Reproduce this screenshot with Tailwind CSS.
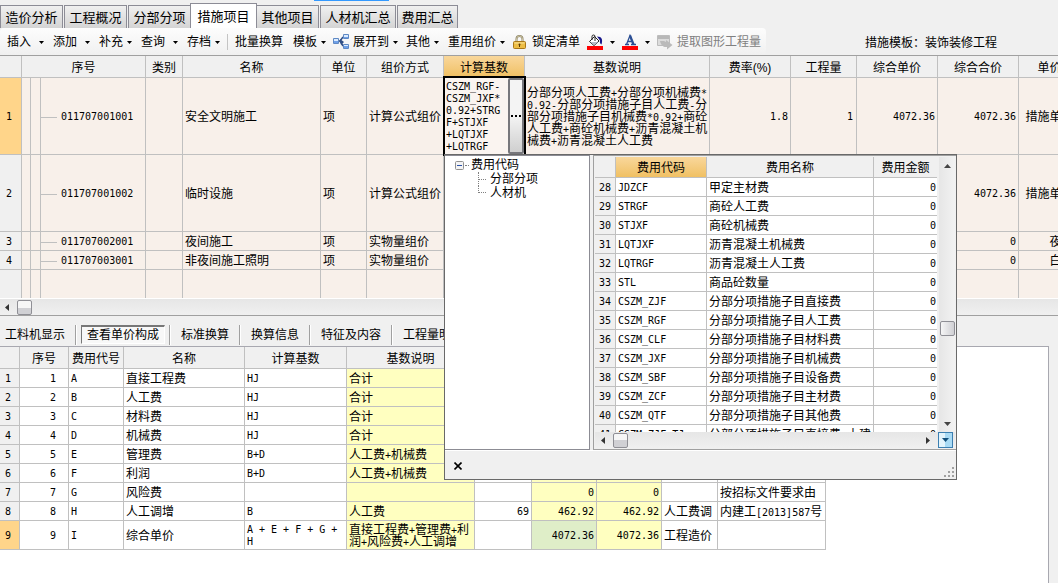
<!DOCTYPE html>
<html lang="zh-CN">
<head>
<meta charset="utf-8">
<title>措施项目</title>
<script src="https://cdn.jsdelivr.net/npm/@tailwindcss/browser@4"></script>
</head>
<body class="relative flex h-screen flex-col overflow-hidden bg-[#f0f0f0] font-['Liberation_Sans','Noto_Sans_CJK_SC',sans-serif] text-[12px] leading-none text-black">

<!-- page tabs -->
<nav class="relative flex h-7 shrink-0 items-end text-[13px]">
  <div class="absolute top-0 left-[314px] h-px w-[75px] bg-[#3399ff]"></div>
  <button class="h-[23px] w-[63px] border border-b-0 border-[#8c8c96] bg-linear-to-b from-[#f0f0f0] to-[#d4d4d4]">造价分析</button>
  <button class="ml-px h-[23px] w-[63px] border border-b-0 border-[#8c8c96] bg-linear-to-b from-[#f0f0f0] to-[#d4d4d4]">工程概况</button>
  <button class="ml-px h-[23px] w-[62px] border border-r-0 border-b-0 border-[#8c8c96] bg-linear-to-b from-[#f0f0f0] to-[#d4d4d4]">分部分项</button>
  <button class="h-[25px] w-[67px] border border-b-0 border-[#8c8c96] bg-white">措施项目</button>
  <button class="h-[23px] w-[62px] border border-l-0 border-b-0 border-[#8c8c96] bg-linear-to-b from-[#f0f0f0] to-[#d4d4d4]">其他项目</button>
  <button class="ml-px h-[23px] w-[76px] border border-b-0 border-[#8c8c96] bg-linear-to-b from-[#f0f0f0] to-[#d4d4d4]">人材机汇总</button>
  <button class="ml-px h-[23px] w-[61px] border border-b-0 border-[#8c8c96] bg-linear-to-b from-[#f0f0f0] to-[#d4d4d4]">费用汇总</button>
</nav>

<!-- toolbar -->
<div class="flex h-7 shrink-0 items-stretch border-b border-[#a0a0a0]">
  <div class="flex w-[766px] items-center rounded-sm bg-linear-to-b from-[#fdfdfd] to-[#f0f0f0] pt-px pl-[7px]">
    <button class="flex w-[46px] items-center gap-2">插入<svg class="h-[3px] w-[5px]" viewBox="0 0 5 3"><path d="M0 0h5L2.500 3z"/></svg></button>
    <button class="flex w-[46px] items-center gap-2">添加<svg class="h-[3px] w-[5px]" viewBox="0 0 5 3"><path d="M0 0h5L2.500 3z"/></svg></button>
    <button class="flex w-[42px] items-center gap-1">补充<svg class="h-[3px] w-[5px]" viewBox="0 0 5 3"><path d="M0 0h5L2.500 3z"/></svg></button>
    <button class="flex w-[46px] items-center gap-2">查询<svg class="h-[3px] w-[5px]" viewBox="0 0 5 3"><path d="M0 0h5L2.500 3z"/></svg></button>
    <button class="flex w-[40px] items-center gap-1">存档<svg class="h-[3px] w-[5px]" viewBox="0 0 5 3"><path d="M0 0h5L2.500 3z"/></svg></button>
    <span class="mr-[7px] h-4 w-px bg-[#c4c4c4]"></span>
    <button class="w-[58px] text-left">批量换算</button>
    <button class="flex w-[40px] items-center gap-1">模板<svg class="h-[3px] w-[5px]" viewBox="0 0 5 3"><path d="M0 0h5L2.500 3z"/></svg></button>
    <button class="flex w-[73px] items-center gap-1">
      <svg class="h-4 w-4" viewBox="0 0 16 16"><path d="M5 7h2l3-4M7 7l3 5" fill="none" stroke="#304f86" stroke-width="1.500"/><g fill="#dcecff" stroke="#5f89c4"><path d="M.5 4.500h5v5h-5zM10.500.5h5v4h-5zM10.500 10.500h5v4h-5z"/></g><path d="M1 7h4v2H1zM11 3h4v1h-4zM11 12h4v2h-4z" fill="#6fa0e8"/><path d="M7 5l4 3-3 3z" fill="#304f86"/></svg>
      <span>展开到</span><svg class="h-[3px] w-[5px]" viewBox="0 0 5 3"><path d="M0 0h5L2.500 3z"/></svg></button>
    <button class="flex w-[42px] items-center gap-1">其他<svg class="h-[3px] w-[5px]" viewBox="0 0 5 3"><path d="M0 0h5L2.500 3z"/></svg></button>
    <button class="flex w-[65px] items-center gap-1">重用组价<svg class="h-[3px] w-[5px]" viewBox="0 0 5 3"><path d="M0 0h5L2.500 3z"/></svg></button>
    <button class="flex w-[74px] items-center gap-[6px]">
      <svg class="h-[14px] w-[13px]" viewBox="0 0 13 14"><path d="M3.500 7V4a3 3 0 0 1 6 0v3" fill="none" stroke="#8a8264" stroke-width="2"/><path d="M3.500 7V4a3 3 0 0 1 6 0v3" fill="none" stroke="#e8e0bc" stroke-width=".7"/><rect x=".5" y="6.500" width="12" height="7" rx="1" fill="#edbd45" stroke="#a97718"/><path d="M1.500 7.500h10v1h-10z" fill="#fbe49c"/><path d="M6 9h1v3H6z" fill="#5c3c05"/><circle cx="6.500" cy="9.500" r="1" fill="#5c3c05"/></svg>锁定清单</button>
    <button class="flex w-[35px] items-center gap-[7px]" aria-label="填充颜色">
      <svg class="h-4 w-4" viewBox="0 0 16 16"><path d="M2.500 7.500l5-5 4.500 4.500-5 4.500z" fill="#fff" stroke="#222"/><path d="M5 6V2.500a1.500 1.500 0 0 1 3 0V7" fill="none" stroke="#222"/><path d="M3.500 8h7.500L7 11z" fill="#b8bcc8"/><path d="M10 2.500c5 0 6 3.500 4.500 8-1-.8-2-1.500-1.500-4z" fill="#16168a"/><path d="M0 12h16v4H0z" fill="#f00"/></svg><svg class="h-[3px] w-[5px]" viewBox="0 0 5 3"><path d="M0 0h5L2.500 3z"/></svg></button>
    <button class="flex w-[35px] items-center gap-[7px]" aria-label="字体颜色">
      <svg class="h-4 w-4" viewBox="0 0 16 16"><path d="M3 10.500h4M9 10.500h5M4.500 10.500L8 1.500l3.500 9M6 7.500h4.500" fill="none" stroke="#2b4f94" stroke-width="1.300"/><path d="M8 1.500l3.500 9" stroke="#2b4f94" stroke-width="2.200"/><path d="M0 12h16v4H0z" fill="#f00"/></svg><svg class="h-[3px] w-[5px]" viewBox="0 0 5 3"><path d="M0 0h5L2.500 3z"/></svg></button>
    <button class="flex items-center gap-1 text-[#808080]" disabled>
      <svg class="h-4 w-4" viewBox="0 0 16 16"><path d="M.5 1.500h12v10H.5z" fill="#dcdcdc" stroke="#bcbcbc"/><path d="M1 2h11v3H1z" fill="#b8b8b8"/><path d="M3 7h4l2 1V6l6.500 5-5.500 4.500V13c-4 .5-6-2-7-6z" fill="#bababa"/></svg>提取图形工程量</button>
  </div>
  <div class="flex items-center pt-[2px] pl-[99px]">措施模板：装饰装修工程</div>
</div>

<!-- measure items -->
<div class="shrink-0 overflow-hidden">
  <table class="w-[1129px] table-fixed border-separate border-spacing-0">
    <colgroup><col class="w-[22px]"><col class="w-[9px]"><col class="w-[10px]"><col class="w-[105px]"><col class="w-[37px]"><col class="w-[138px]"><col class="w-[46px]"><col class="w-[77px]"><col class="w-[81px]"><col class="w-[185px]"><col class="w-[81px]"><col class="w-[66px]"><col class="w-[81px]"><col class="w-[81px]"><col class="w-[110px]"></colgroup>
    <thead>
      <tr class="h-[22px] bg-[#f0f0f0] *:border-r *:border-b *:border-[#c0c0c0] *:p-0 *:pt-[2px] *:font-normal">
        <th></th><th colspan="3">序号</th><th>类别</th><th>名称</th><th>单位</th><th>组价方式</th><th class="bg-linear-to-b from-[#f9d79b] to-[#f0c062]">计算基数</th><th>基数说明</th><th>费率(%)</th><th>工程量</th><th>综合单价</th><th>综合合价</th><th>单价构成文件</th>
      </tr>
    </thead>
    <tbody id="items"></tbody>
  </table>
</div>
<div class="flex h-[18px] shrink-0 items-center border-t border-b border-t-white border-b-[#a0a0a0] bg-linear-to-b from-[#e6e6e6] to-[#f0f0f0] pl-[5px]">
  <svg class="h-[7px] w-1" viewBox="0 0 4 7"><path d="M4 0v7L0 3.500z" fill="#333"/></svg>
  <div class="ml-2 h-[15px] w-[15px] rounded-xs border border-[#8f8f95] bg-linear-to-b from-[#f6f6f6] from-50% to-[#d0d0d4] to-50%"></div>
</div>

<!-- detail tabs -->
<nav class="flex h-[30px] shrink-0 items-center pt-[7px]">
  <button class="w-[75px] pl-[5px] text-left">工料机显示</button>
  <span class="h-5 w-[2px] border-l border-[#a0a0a0] bg-white"></span>
  <button class="ml-1 h-[19px] w-[84px] border border-t-2 border-[#fff] border-t-[#777] border-l-[#777] bg-[#f8f8f8]">查看单价构成</button>
  <span class="ml-1 h-5 w-[2px] border-l border-[#a0a0a0] bg-white"></span>
  <button class="w-[68px]">标准换算</button>
  <span class="h-5 w-[2px] border-l border-[#a0a0a0] bg-white"></span>
  <button class="w-[68px]">换算信息</button>
  <span class="h-5 w-[2px] border-l border-[#a0a0a0] bg-white"></span>
  <button class="w-[80px]">特征及内容</button>
  <span class="h-5 w-[2px] border-l border-[#a0a0a0] bg-white"></span>
  <button class="w-[80px]">工程量明细</button>
</nav>

<!-- unit price breakdown -->
<div class="mr-[9px] min-h-0 flex-1 overflow-hidden border-t border-r border-[#a8a8b0] bg-white">
  <table class="w-[826px] table-fixed border-separate border-spacing-0">
    <colgroup><col class="w-[20px]"><col class="w-[49px]"><col class="w-[55px]"><col class="w-[121px]"><col class="w-[102px]"><col class="w-[128px]"><col class="w-[57px]"><col class="w-[65px]"><col class="w-[65px]"><col class="w-[56px]"><col class="w-[108px]"></colgroup>
    <thead>
      <tr class="h-[22px] bg-[#f0f0f0] *:border-r *:border-b *:border-[#c0c0c0] *:p-0 *:pt-[2px] *:font-normal">
        <th></th><th>序号</th><th>费用代号</th><th>名称</th><th>计算基数</th><th>基数说明</th><th></th><th></th><th></th><th></th><th></th>
      </tr>
    </thead>
    <tbody id="fees"></tbody>
  </table>
</div>

<!-- fee code picker, floats under the edited cell -->
<section class="absolute top-[154px] left-[444px] flex h-[326px] w-[513px] flex-col border border-[#696969] bg-[#f0f0f0]">
  <div class="flex h-[295px] justify-between">
    <div class="w-[145px] border border-l-0 border-[#8c8c94] bg-white pt-[2px] pl-[10px]">
      <div class="flex h-[14px] items-center">
        <svg class="h-[9px] w-[9px]" viewBox="0 0 9 9"><rect x=".5" y=".5" width="8" height="8" rx="1" fill="#f4f4f4" stroke="#919191"/><path d="M2 4.500h5" stroke="#2b52a8"/></svg>
        <span class="mr-[2px] ml-px w-1 border-t border-dotted border-[#808080]"></span>费用代码
      </div>
      <ul class="pl-[23px]">
        <li class="flex h-[14px] items-center gap-1"><span class="flex h-full items-center border-l border-dotted border-[#808080]"><span class="w-[7px] border-t border-dotted border-[#808080]"></span></span>分部分项</li>
        <li class="flex h-[14px] items-center gap-1"><span class="h-full"><span class="block h-1/2 w-2 border-b border-l border-dotted border-[#808080]"></span></span>人材机</li>
      </ul>
    </div>
    <div class="w-[363px] border border-r-0 border-[#a0a0a0] bg-[#f0f0f0] p-px">
      <div class="flex h-[275px]">
        <div class="w-[342px] overflow-hidden">
          <table class="w-[342px] table-fixed border-separate border-spacing-0">
            <colgroup><col class="w-[21px]"><col class="w-[91px]"><col class="w-[167px]"><col class="w-[63px]"></colgroup>
            <thead>
              <tr class="h-[21px] *:border-r *:border-b *:border-[#c0c0c0] *:p-0 *:pt-[2px] *:font-normal"><th></th><th class="bg-linear-to-b from-[#f9d79b] to-[#f0c062]">费用代码</th><th>费用名称</th><th class="border-r-0!">费用金额</th></tr>
            </thead>
            <tbody id="codes"></tbody>
          </table>
        </div>
        <div class="ml-[2px] flex w-4 flex-col items-center bg-linear-to-r from-[#e6e6e6] to-[#f2f2f2] pt-[7px] pb-[6px]">
          <svg class="h-1 w-[7px]" viewBox="0 0 7 4"><path d="M0 4h7L3.500 0z" fill="#444"/></svg>
          <div class="mt-[153px] h-[15px] w-[15px] rounded-xs border border-[#8f8f95] bg-linear-to-r from-[#f6f6f6] to-[#d0d0d4]"></div>
          <svg class="mt-auto h-1 w-[7px]" viewBox="0 0 7 4"><path d="M0 0h7L3.500 4z" fill="#444"/></svg>
        </div>
      </div>
      <div class="flex h-4 items-center bg-linear-to-b from-[#e6e6e6] to-[#f0f0f0] pl-[6px]">
        <svg class="h-[7px] w-1" viewBox="0 0 4 7"><path d="M4 0v7L0 3.500z" fill="#333"/></svg>
        <div class="ml-2 h-[15px] w-[15px] rounded-xs border border-[#8f8f95] bg-linear-to-b from-[#f6f6f6] from-50% to-[#d0d0d4] to-50%"></div>
        <svg class="ml-auto h-[7px] w-1" viewBox="0 0 4 7"><path d="M0 0v7l4-3.500z" fill="#333"/></svg>
        <button class="mr-[2px] ml-2 flex h-4 w-[15px] items-center justify-center border border-[#3c7fb1] bg-linear-to-r from-[#e3f4fc] from-50% to-[#a9dbf5] to-50%" aria-label="更多"><svg class="h-1 w-[7px]" viewBox="0 0 7 4"><path d="M0 0h7L3.500 4z" fill="#12507c"/></svg></button>
      </div>
    </div>
  </div>
  <footer class="flex flex-1 justify-between border-t border-white pt-[2px]">
    <button class="ml-[9px] self-center" aria-label="关闭"><svg class="h-2 w-2" viewBox="0 0 8 8"><path d="M.5.5l7 7M7.500.5l-7 7" stroke="#000" stroke-width="1.600"/></svg></button>
    <svg class="mr-[2px] mb-[2px] h-[10px] w-[10px] self-end" viewBox="0 0 10 10"><path d="M8 0h2v2H8zM4 4h2v2H4zM8 4h2v2H8zM0 8h2v2H0zM4 8h2v2H4zM8 8h2v2H8z" fill="#a0a0a0"/></svg>
  </footer>
</section>

<script>
  const mono = "font-['DejaVu_Sans_Mono','Noto_Sans_CJK_SC',monospace] text-[10px]";
  // Sets the Latin runs of a mixed text in the half-width face; array items are lines.
  const mixed = lines => [].concat(lines)
    .map(t => t.replace(/[\x21-\x7e]+/g, s => `<span class="${mono}">${s}</span>`)).join('<br>');

  const editor = `<td class="relative"><div class="absolute -top-[2px] -right-[2px] -bottom-[2px] -left-px flex justify-between border-2 border-black bg-[#faf4f0]">
    <div class="${mono} pt-[3px] pl-px leading-[12px] whitespace-nowrap">CSZM_RGF-<br>CSZM_JXF*<br>0.92+STRG<br>F+STJXF<br>+LQTJXF<br>+LQTRGF</div>
    <button class="flex w-4 items-center justify-center rounded-xs border-2 border-[#77777c] bg-linear-to-b from-[#f4f4f4] from-50% to-[#cfcfcf]" aria-label="选择费用代码"><svg class="h-[2px] w-[10px] shrink-0" viewBox="0 0 10 2"><path d="M0 0h2v2H0zM4 0h2v2H4zM8 0h2v2H8z"/></svg></button></div></td>`;
  const note = ['分部分项人工费+分部分项机械费*', '0.92-分部分项措施子目人工费-分', '部分项措施子目机械费*0.92+商砼', '人工费+商砼机械费+沥青混凝土机', '械费+沥青混凝土人工费'];
  const items = [
    ['1', '011707001001', '安全文明施工', '项', '计算公式组价', note, '1.8', '1', '4072.36', '4072.36', '措施单价构成文件'],
    ['2', '011707001002', '临时设施', '项', '计算公式组价', '', '', '', '', '4072.36', '措施单价构成文件'],
    ['3', '011707002001', '夜间施工', '项', '实物量组价', '', '', '', '', '0', '夜间施工'],
    ['4', '011707003001', '非夜间施工照明', '项', '实物量组价', '', '', '', '', '0', '白天施工'],
    ['', '', '', '', '', '', '', '', '', '', '']
  ];
  const itemHeights = ['h-[77px]', 'h-[77px]', 'h-[19px]', 'h-[19px]', 'h-[28px]'];
  document.getElementById('items').innerHTML = items.map((r, i) => `
    <tr class="${itemHeights[i]} bg-[#f8f0ea] *:border-r ${i < 4 ? '*:border-b' : ''} *:border-[#c0c0c0] *:p-0 *:pt-[2px]">
      <td class="${mono} pr-[3px]! text-center ${i === 0 ? 'bg-[#ffd58a]' : 'bg-[#f0f0f0]'}">${r[0]}</td><td></td><td></td>
      <td class="${mono}">${r[1] ? `<div class="flex items-center gap-1"><span class="h-px w-4 bg-[#c0c0c0]"></span>${r[1]}</div>` : ''}</td>
      <td></td><td class="pl-[2px]!">${r[2]}</td><td class="pl-[2px]!">${r[3]}</td><td class="pl-[2px]! whitespace-nowrap">${r[4]}</td>
      ${i === 0 ? editor : '<td></td>'}
      <td class="pl-[2px]! whitespace-nowrap">${mixed(r[5])}</td>
      <td class="${mono} pr-[2px]! text-right">${r[6]}</td><td class="${mono} pr-[3px]! text-right">${r[7]}</td>
      <td class="${mono} pr-[2px]! text-right">${r[8]}</td><td class="${mono} pr-[2px]! text-right">${r[9]}</td>
      <td class="text-center whitespace-nowrap">${r[10]}</td>
    </tr>`).join('');

  const fees = [
    ['A', '直接工程费', 'HJ', '合计', '', '', '', '', ''],
    ['B', '人工费', 'HJ', '合计', '', '', '', '', ''],
    ['C', '材料费', 'HJ', '合计', '', '', '', '', ''],
    ['D', '机械费', 'HJ', '合计', '', '', '', '', ''],
    ['E', '管理费', 'B+D', '人工费+机械费', '', '', '', '', ''],
    ['F', '利润', 'B+D', '人工费+机械费', '', '', '', '', ''],
    ['G', '风险费', '', '', '', '0', '0', '', '按招标文件要求由'],
    ['H', '人工调增', 'B', '人工费', '69', '462.92', '462.92', '人工费调', '内建工[2013]587号'],
    ['I', '综合单价', 'A + E + F + G +<br>H', ['直接工程费+管理费+利', '润+风险费+人工调增'], '', '4072.36', '4072.36', '工程造价', '']
  ];
  document.getElementById('fees').innerHTML = fees.map((r, i) => `
    <tr class="${i === 8 ? 'h-[29px]' : 'h-[19px]'} bg-white whitespace-nowrap *:border-r *:border-b *:border-[#c0c0c0] *:p-0 *:pt-[2px]">
      <td class="${mono} pr-[3px]! text-center ${i === 8 ? 'bg-[#ffd58a]' : 'bg-[#f0f0f0]'}">${i + 1}</td>
      <td class="${mono} pr-3! text-right">${i + 1}</td>
      <td class="${mono} pl-[2px]!">${r[0]}</td><td class="pl-[2px]!">${r[1]}</td><td class="${mono} pl-[2px]! ${i === 8 ? 'leading-[12px]' : ''}">${r[2]}</td>
      <td class="bg-[#ffffc0] pl-[2px]!">${mixed(r[3])}</td>
      <td class="${mono} pr-[2px]! text-right">${r[4]}</td>
      <td class="${mono} pr-[2px]! text-right ${i === 8 ? 'bg-[#dfeec8]' : 'bg-[#ffffc0]'}">${r[5]}</td>
      <td class="${mono} bg-[#ffffc0] pr-[2px]! text-right">${r[6]}</td>
      <td class="pl-[2px]!">${r[7]}</td><td class="pl-[2px]!">${mixed(r[8])}</td>
    </tr>`).join('');

  const codes = [
    ['JDZCF', '甲定主材费'], ['STRGF', '商砼人工费'], ['STJXF', '商砼机械费'], ['LQTJXF', '沥青混凝土机械费'],
    ['LQTRGF', '沥青混凝土人工费'], ['STL', '商品砼数量'], ['CSZM_ZJF', '分部分项措施子目直接费'], ['CSZM_RGF', '分部分项措施子目人工费'],
    ['CSZM_CLF', '分部分项措施子目材料费'], ['CSZM_JXF', '分部分项措施子目机械费'], ['CSZM_SBF', '分部分项措施子目设备费'],
    ['CSZM_ZCF', '分部分项措施子目主材费'], ['CSZM_QTF', '分部分项措施子目其他费'], ['CSZM_ZJF_TJ', '分部分项措施子目直接费_土建']
  ];
  document.getElementById('codes').innerHTML = codes.map((r, i) => `
    <tr class="h-[19px] bg-white whitespace-nowrap *:border-r *:border-b *:border-[#c0c0c0] *:p-0 *:pt-[2px]">
      <td class="${mono} bg-[#f0f0f0] text-center">${28 + i}</td><td class="${mono} pl-[2px]!">${r[0]}</td>
      <td class="pl-[2px]!">${mixed(r[1])}</td><td class="${mono} border-r-0! pr-px! text-right">0</td>
    </tr>`).join('');
</script>
</body>
</html>
